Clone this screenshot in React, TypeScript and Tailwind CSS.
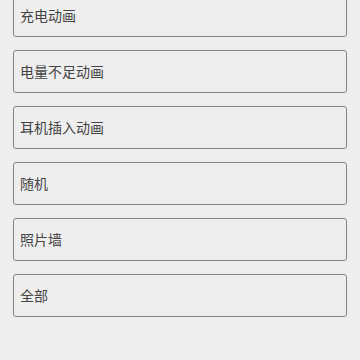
import React from "react";

const items = ["充电动画", "电量不足动画", "耳机插入动画", "随机", "照片墙", "全部"];

export default function App() {
  return (
    <div
      className="w-[360px] h-[360px] overflow-hidden bg-[#eeeeee]"
      style={{ fontFamily: '"Noto Sans CJK SC", "Noto Sans", sans-serif' }}
    >
      <div className="flex flex-col gap-[13px] px-[13px] -mt-[6px]">
        {items.map((t) => (
          <div
            key={t}
            className="h-[43px] flex items-center pl-[6px] border-[1.5px] border-[#858585] rounded-[3px] text-[14px] text-[#444444]"
          >
            {t}
          </div>
        ))}
      </div>
    </div>
  );
}
